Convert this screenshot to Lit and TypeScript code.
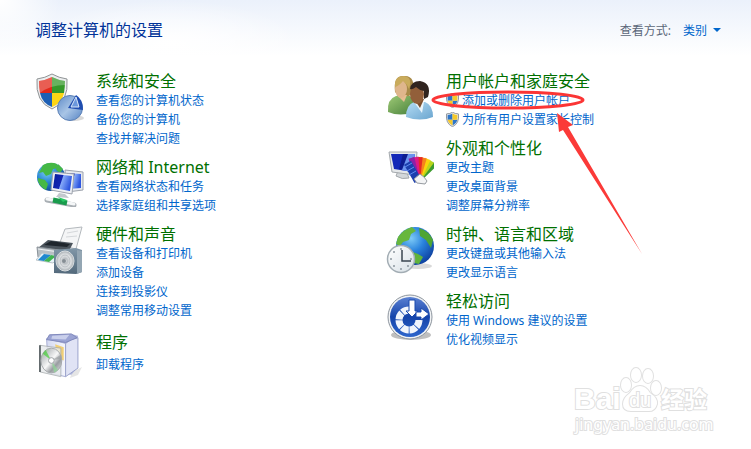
import { LitElement, html, css, svg, nothing, TemplateResult } from "lit";
import { customElement } from "lit/decorators.js";

interface Task {
  label: string;
  elevated?: boolean;
}

interface Category {
  title: string;
  icon: TemplateResult;
  tasks: Task[];
  marked?: boolean;
}

const security = html`<svg viewBox="0 0 48 50" aria-hidden="true">
  <defs>
    <linearGradient id="pie" x1="0" y1="0" x2="1" y2="1"><stop offset="0" stop-color="#5e8bc8"/><stop offset=".5" stop-color="#a9c5e6"/><stop offset="1" stop-color="#5583c3"/></linearGradient>
  </defs>
  <ellipse cx="38" cy="47" rx="10" ry="3" fill="#000" opacity=".15"/>
  <path d="M16 3 Q23 7 31 8 Q33 31 16 38 Q-1 31 1 8 Q9 7 16 3Z" fill="#eceeef" stroke="#909496"/>
  <path d="M16 6 V22 H4 Q3 16 3 10 Q10 9 16 6Z" fill="#e2281a"/>
  <path d="M16 6 Q22 9 29 10 Q29 16 28 22 H16Z" fill="#35992a"/>
  <path d="M4 22 H16 V36 Q6 32 4 22Z" fill="#1d5fb4"/>
  <path d="M28 22 H16 V36 Q26 32 28 22Z" fill="#fcd514"/>
  <path d="M3 10 Q10 9 16 6 Q22 9 29 10 V14 Q14 14 4 22Z" fill="#fff" opacity=".25"/>
  <circle cx="34" cy="37" r="12.500" fill="url(#pie)" stroke="#5a7fb5"/>
  <path d="M32 37 L40 24 Q47 28 47 39Z" fill="#1f4db0"/>
  <path d="M35 36 L40 26 L43 36Z" fill="#6b97dc" stroke="#dbe8fa"/>
</svg>`;

const network = html`<svg viewBox="0 0 48 50" aria-hidden="true">
  <defs>
    <radialGradient id="sea" cx=".35" cy=".3" r=".8"><stop offset="0" stop-color="#7fd0f8"/><stop offset=".5" stop-color="#2583d0"/><stop offset="1" stop-color="#0a3b88"/></radialGradient>
    <linearGradient id="screen" x1="0" y1="0" x2="1" y2=".3"><stop offset="0" stop-color="#0a1f9c"/><stop offset=".5" stop-color="#1326b4"/><stop offset=".55" stop-color="#86aaf8"/><stop offset="1" stop-color="#2f57e0"/></linearGradient>
  </defs>
  <circle cx="15" cy="20" r="14" fill="url(#sea)"/>
  <path d="M7 8 Q14 4 21 7 L22 11 L17 12 L15 17 L10 19 L7 15 L3 16Z M2 21 L9 23 L12 27 L10 33 Q4 30 2 24Z M22 7 L27 12 L24 16 L20 13Z" fill="#45b845"/>
  <path d="M29 13 L47 15 V33 L31 35Z" fill="#e6e9ee" stroke="#9da3ad"/>
  <path d="M31 16 L45 17 V31 L32 32Z" fill="url(#screen)"/>
  <path d="M17 15 L38 17 L36 37 L15 33Z" fill="#eef0f4" stroke="#9da3ad"/>
  <path d="M19 17 L36 19 L34 34 L17 31Z" fill="url(#screen)"/>
  <path d="M23 36 L29 37 L33 41 L20 40Z" fill="#c3c8ce"/>
  <path d="M11 43 L38 48" stroke="#a9afb4" stroke-width="5" stroke-linecap="round"/>
  <path d="M11 42 L38 47" stroke="#f5f7f8" stroke-width="3" stroke-linecap="round"/>
  <path d="M17 43 L31 46" stroke="#1a9b4c" stroke-width="5"/>
  <path d="M22 40 L31 43 L27 45Z" fill="#29c765"/>
</svg>`;

const hardware = html`<svg viewBox="0 0 48 50" aria-hidden="true">
  <defs>
    <linearGradient id="box" x1="0" y1="0" x2="0" y2="1"><stop offset="0" stop-color="#8197a8"/><stop offset="1" stop-color="#53697b"/></linearGradient>
    <radialGradient id="cone"><stop offset="0" stop-color="#f7f7f7"/><stop offset=".25" stop-color="#b8bdc1"/><stop offset=".6" stop-color="#e9ebec"/><stop offset="1" stop-color="#a6adb2"/></radialGradient>
  </defs>
  <g transform="translate(0 2)">
    <path d="M29 3 L46 1 L40 23 L23 19Z" fill="#f4f5f6" stroke="#b4b9bd"/>
    <path d="M31 7 L42 5 M30 11 L41 10" stroke="#d4d7da"/>
    <path d="M12 14 L37 17 L33 25 L2 22Z" fill="#4b545c"/>
    <path d="M15 15 L34 18 L31 21 L8 19Z" fill="#1f262d"/>
    <path d="M1 21 L31 25 V35 L2 31Z" fill="#b9c0c5" stroke="#899198"/>
    <path d="M2 23 L30 27" stroke="#eef1f3"/>
    <path d="M6 27 L24 30 L17 37 L0 34Z" fill="#e8f3f8" stroke="#bcc5ca"/>
    <path d="M8 28 L15 29 L8 35 L2 34Z" fill="#2088cf"/>
    <path d="M15 29 L20 30 L13 36 L8 35Z" fill="#3fb451"/>
    <path d="M18 24 L40 22 L46 24 V46 L40 48 L18 47Z" fill="url(#box)"/>
    <path d="M41 24 L46 25 V46 L41 48Z" fill="#94a6b3"/>
    <ellipse cx="29" cy="35" rx="9" ry="10" fill="url(#cone)" stroke="#d8dde0"/>
    <ellipse cx="29" cy="35" rx="5" ry="6" fill="none" stroke="#b5bbc0"/>
    <circle cx="28" cy="35" r="2" fill="#868e94"/>
  </g>
</svg>`;

const programs = html`<svg viewBox="0 0 48 50" aria-hidden="true">
  <defs>
    <linearGradient id="disc" x1="0" y1="0" x2="1" y2="1"><stop offset="0" stop-color="#6fd04c"/><stop offset=".25" stop-color="#c5c8ca"/><stop offset=".5" stop-color="#f8f8f8"/><stop offset=".7" stop-color="#989ca0"/><stop offset="1" stop-color="#eceef0"/></linearGradient>
    <linearGradient id="carton"><stop offset="0" stop-color="#d4d9f1"/><stop offset="1" stop-color="#f5f6fc"/></linearGradient>
  </defs>
  <path d="M36 40 L46 35 L42 43 L34 46Z" fill="#000" opacity=".1"/>
  <g transform="translate(3 0) scale(.95)">
    <path d="M11 3 L34 2 L41 4 V37 L34 45 L12 43Z" fill="#aeb5dc"/>
    <path d="M8 7 L28 12 V47 L10 43Z" fill="url(#carton)" stroke="#a5acd2"/>
    <path d="M28 12 L34 8 L41 6 V38 L28 47Z" fill="#e0e3f5" stroke="#9aa2cb"/>
    <path d="M11 3 L34 2 L40 6 L28 11 L8 8Z" fill="#9ba4d4" stroke="#8088bb"/>
    <path d="M14 4 L32 3 L28 8 L13 7Z" fill="#c9cfeb"/>
    <path d="M17 13 L26 16 V30 L19 27Z" fill="#f1cf76"/>
    <path d="M1 14 L23 17 V47 L1 42Z" fill="#e8ebec" opacity=".8" stroke="#a5abad"/>
    <path d="M0 14 H2 V42 H0Z" fill="#646b6e"/>
    <ellipse cx="13" cy="30" rx="11" ry="13" fill="url(#disc)" stroke="#a4a8ab"/>
    <path d="M13 30 L4 23 L7 19Z" fill="#49cf3c" opacity=".7"/>
    <path d="M13 30 L20 40 L16 43Z" fill="#8fd695" opacity=".7"/>
    <path d="M13 30 L23 24 L23 28Z" fill="#8d9194" opacity=".5"/>
    <circle cx="13" cy="30" r="3" fill="#fff" stroke="#9ba0a3"/>
  </g>
</svg>`;

const accounts = html`<svg viewBox="0 0 48 50" aria-hidden="true">
  <defs>
    <linearGradient id="green" x1="0" y1="0" x2="1" y2="1"><stop offset="0" stop-color="#9ec976"/><stop offset="1" stop-color="#47803a"/></linearGradient>
    <linearGradient id="blue" x1="0" y1="0" x2="1" y2="1"><stop offset="0" stop-color="#b4dcf4"/><stop offset="1" stop-color="#6aa5cf"/></linearGradient>
  </defs>
  <path d="M2 41 Q1 28 10 25 L24 25 Q29 28 29 41 Q14 46 2 41Z" fill="url(#green)"/>
  <path d="M9 21 Q7 4 18 5 Q30 4 27 23 Q17 29 9 21Z" fill="#a88a48"/>
  <path d="M11 24 H21 L18 31Z" fill="#e7bd91"/>
  <ellipse cx="15" cy="18" rx="6" ry="9" fill="#dfb68c"/>
  <path d="M9 16 Q13 15 17 10 Q21 13 23 18 Q27 6 18 5 Q8 5 9 16Z" fill="#c9ab5c"/>
  <path d="M20 46 Q20 34 28 31 L39 31 Q47 34 47 46 Q34 51 20 46Z" fill="url(#blue)"/>
  <path d="M28 31 H38 L36 42Z" fill="#eaf5fb"/>
  <path d="M28 28 H38 L34 37Z" fill="#7d4e2c"/>
  <ellipse cx="31" cy="23" rx="7" ry="10" fill="#925f3a"/>
  <path d="M24 18 Q25 10 34 10 Q46 12 42 26 L38 28 L38 20 Q33 19 30 16 Q26 19 24 18Z" fill="#30241f"/>
</svg>`;

const fans = ["#3d9c2f", "#b9d51b", "#fbd20c", "#f6831c", "#e62b24", "#dd1a86", "#8d20a6"];

const appearance = html`<svg viewBox="0 0 48 50" aria-hidden="true">
  <path d="M12 33 L21 35 L23 40 Q16 42 10 38Z" fill="#d3d7da" stroke="#a4a9ad"/>
  <path d="M3 14 L31 14 L29 37 L6 34Z" fill="#e5e8ea" stroke="#a4a9ad"/>
  <path d="M5 16 L29 16 L27 34 L8 31Z" fill="#1328b8"/>
  <path d="M19 16 L29 16 L27 34 L15 32Z" fill="#6b93ef"/>
  <path d="M17 16 L22 16 L16 32 L13 31Z" fill="#0d1c90"/>
  <g transform="translate(32 43)">
    ${[44, 34, 24, 14, 4, -6, -16].map(
      (angle, i) => svg`<path d="M-2 0 L-3 -24 L3 -24 L2 0Z" fill=${fans[i]} transform="rotate(${angle})"/>`
    )}
    <path d="M-4 0 L-4 -21 L4 -21 L4 0Z" fill="#1c3fae" transform="rotate(-30)"/>
    <path d="M-13 -14 L-6 -18 M-11 -10 L-4 -14 M-9 -6 L-2 -10" stroke="#5f8cf0"/>
  </g>
  <path d="M28 41 L34 36 L38 39 L41 43 L39 46 L31 45Z" fill="#f3f4f5" stroke="#969ba0"/>
</svg>`;

const clock = html`<svg viewBox="0 0 48 50" aria-hidden="true">
  <defs>
    <radialGradient id="ocean" cx=".4" cy=".3" r=".75"><stop offset="0" stop-color="#7ecbf7"/><stop offset=".45" stop-color="#2a83dd"/><stop offset="1" stop-color="#0b3b9b"/></radialGradient>
    <linearGradient id="dial" x1="0" y1="0" x2="1" y2="1"><stop offset="0" stop-color="#fff"/><stop offset="1" stop-color="#d7e0e6"/></linearGradient>
  </defs>
  <ellipse cx="32" cy="42" rx="14" ry="3" fill="#000" opacity=".15"/>
  <circle cx="29" cy="22" r="19" fill="url(#ocean)"/>
  <path d="M12 13 Q18 5 26 3 L30 7 L25 10 L23 16 L17 18 L14 22 L10 20Z" fill="#67b73d"/>
  <path d="M33 4 Q43 7 47 16 L45 24 L40 16 L34 12Z" fill="#4fa535"/>
  <path d="M24 27 L32 30 L37 33 L33 40 L28 39Z" fill="#60b33b"/>
  <circle cx="15" cy="35" r="13.500" fill="url(#dial)" stroke="#a3adb4" stroke-width="1.500"/>
  <g fill="#8c979f"><circle cx="15" cy="25" r="1"/><circle cx="25" cy="35" r="1"/><circle cx="15" cy="45" r="1"/><circle cx="5" cy="35" r="1"/><circle cx="8" cy="28" r="1"/><circle cx="8" cy="42" r="1"/><circle cx="22" cy="42" r="1"/></g>
  <path d="M16 26 V37 H25" fill="none" stroke="#3a4650" stroke-width="1.500"/>
</svg>`;

const ease = html`<svg viewBox="0 0 48 50" aria-hidden="true">
  <defs>
    <linearGradient id="badge" x1="0" y1="0" x2="0" y2="1"><stop offset="0" stop-color="#5a80d2"/><stop offset=".5" stop-color="#1544aa"/><stop offset="1" stop-color="#2e66cc"/></linearGradient>
  </defs>
  <ellipse cx="25" cy="44" rx="20" ry="5" fill="#000" opacity=".25"/>
  <circle cx="24" cy="26" r="22" fill="#f0f2f4" stroke="#8e969f"/>
  <circle cx="24" cy="26" r="20" fill="url(#badge)"/>
  <path d="M33 29 A10 10 0 1 1 23 19" fill="none" stroke="#f1f5fc" stroke-width="7" pathLength="59" stroke-dasharray="9 1"/>
  <path d="M23 9 H29 V20 H32 L26 26 L20 20 H23Z" fill="#fff" stroke="#1b4aae"/>
  <path d="M30 21 H35 V17 L43 23 L35 29 V26 H30Z" fill="#fff" stroke="#1b4aae"/>
</svg>`;

const shield = html`<svg class="shield" viewBox="0 0 48 56" aria-hidden="true">
  <path d="M24 1 Q34 7 46 7 Q51 42 24 55 Q-3 42 2 7 Q14 7 24 1Z" fill="#eef0f2" stroke="#777e86" stroke-width="3"/>
  <path d="M24 6 V29 H6 Q5 20 6 11 Q17 11 24 6Z M42 29 H24 V50 Q39 42 42 29Z" fill="#2d75c8"/>
  <path d="M24 6 Q31 11 42 11 Q43 20 42 29 H24Z M6 29 H24 V50 Q9 42 6 29Z" fill="#f5c92b"/>
</svg>`;

const columns: Category[][] = [
  [
    { title: "系统和安全", icon: security, tasks: [{ label: "查看您的计算机状态" }, { label: "备份您的计算机" }, { label: "查找并解决问题" }] },
    { title: "网络和 Internet", icon: network, tasks: [{ label: "查看网络状态和任务" }, { label: "选择家庭组和共享选项" }] },
    { title: "硬件和声音", icon: hardware, tasks: [{ label: "查看设备和打印机" }, { label: "添加设备" }, { label: "连接到投影仪" }, { label: "调整常用移动设置" }] },
    { title: "程序", icon: programs, tasks: [{ label: "卸载程序" }] },
  ],
  [
    { title: "用户帐户和家庭安全", icon: accounts, marked: true, tasks: [{ label: "添加或删除用户帐户", elevated: true }, { label: "为所有用户设置家长控制", elevated: true }] },
    { title: "外观和个性化", icon: appearance, tasks: [{ label: "更改主题" }, { label: "更改桌面背景" }, { label: "调整屏幕分辨率" }] },
    { title: "时钟、语言和区域", icon: clock, tasks: [{ label: "更改键盘或其他输入法" }, { label: "更改显示语言" }] },
    { title: "轻松访问", icon: ease, tasks: [{ label: "使用 Windows 建议的设置" }, { label: "优化视频显示" }] },
  ],
];

@customElement("app-root")
export class AppRoot extends LitElement {
  static styles = css`
    :host {
      display: block;
      position: relative;
      box-sizing: border-box;
      min-height: 100vh;
      font: 12px/19px "Noto Sans", "Noto Sans CJK SC", sans-serif;
      background:
        radial-gradient(ellipse 130px 44px at 170px 44px, #fff, #fff0),
        radial-gradient(ellipse 60px 50px at 0 0, #fff, #fff0),
        linear-gradient(#ebf1fb, #fff 56px);
    }
    a { color: #0066cc; text-decoration: none; }
    a:hover { text-decoration: underline; }
    h1, h2, ul { margin: 0; padding: 0; font-weight: 400; }
    ul { list-style: none; }
    header {
      display: flex;
      justify-content: space-between;
      align-items: center;
      height: 60px;
      padding: 0 30px 0 35px;
    }
    h1 { color: #003399; font-size: 16px; line-height: 20px; }
    .view { display: flex; gap: 12px; align-items: center; color: #5a6678; }
    .view button {
      display: flex;
      align-items: center;
      gap: 6px;
      border: 0;
      padding: 0;
      background: none;
      font: inherit;
      color: #0066cc;
    }
    .caret { border: 4px solid transparent; border-top-color: #0066cc; border-bottom: 0; }
    main {
      display: grid;
      grid-template-columns: 1fr 1fr;
      padding: 11px 15px 60px 36px;
    }
    .column { display: flex; flex-direction: column; gap: 9px; }
    .category {
      position: relative;
      display: grid;
      grid-template-columns: 48px 1fr;
      column-gap: 12px;
      align-items: start;
    }
    .icon { height: 0; }
    .icon svg { display: block; width: 48px; height: 50px; }
    h2 { font-size: 16px; line-height: 20px; }
    h2 a { color: #007000; }
    .single { margin-top: 3px; }
    .single h2 { margin-bottom: 3px; }
    li { display: flex; align-items: center; gap: 3px; white-space: nowrap; }
    .shield { width: 13px; height: 15px; }
    .mark {
      position: absolute;
      left: 44px;
      top: 18px;
      width: 216px;
      height: 168px;
      z-index: 1;
      pointer-events: none;
    }
    .watermark {
      position: absolute;
      right: 36px;
      bottom: 12px;
      width: 144px;
      height: 74px;
      fill: #fff;
      stroke: #e0e0e0;
      stroke-width: 2px;
      paint-order: stroke;
      font-family: "Noto Sans", "Noto Sans CJK SC", sans-serif;
    }
    .brand { font-size: 30px; font-weight: 700; font-family: "Liberation Sans", sans-serif; }
    .paw-word { font-size: 20px; font-family: "Liberation Sans", sans-serif; }
    .brand-cn { font-size: 23px; font-weight: 700; }
    .site { font-size: 16px; }
  `;

  private renderCategory(c: Category) {
    return html`<section class="category ${c.tasks.length === 1 ? "single" : ""}">
      <div class="icon">${c.icon}</div>
      <div>
        <h2><a href="#">${c.title}</a></h2>
        <ul>
          ${c.tasks.map((t) => html`<li>${t.elevated ? shield : nothing}<a href="#">${t.label}</a></li>`)}
        </ul>
      </div>
      ${c.marked
        ? html`<svg class="mark" viewBox="0 0 216 168" aria-hidden="true">
            <ellipse cx="78" cy="11" rx="75" ry="8" fill="none" stroke="#fb3535" stroke-width="3"/>
            <path d="M127 24 L143 36 L138 38 L212 165 L133 41 L129 43Z" fill="#fb3a38"/>
          </svg>`
        : nothing}
    </section>`;
  }

  render() {
    return html`
      <header>
        <h1>调整计算机的设置</h1>
        <div class="view">
          <span id="view-label">查看方式:</span>
          <button type="button" aria-describedby="view-label">类别<span class="caret"></span></button>
        </div>
      </header>
      <main>
        ${columns.map((column) => html`<div class="column">${column.map((c) => this.renderCategory(c))}</div>`)}
      </main>
      <svg class="watermark" viewBox="0 0 144 74">
        <text class="brand" x="3" y="46">Bai</text>
        <g>
          <ellipse cx="55" cy="22" rx="5" ry="7"/>
          <ellipse cx="65" cy="12" rx="5" ry="7"/>
          <ellipse cx="77" cy="13" rx="5" ry="7"/>
          <ellipse cx="85" cy="25" rx="5" ry="7"/>
          <path d="M69 23 Q75 23 79 30 Q87 35 86 41 Q84 49 76 48 H60 Q52 48 52 41 Q52 35 59 30 Q63 23 69 23Z"/>
        </g>
        <text class="paw-word" x="58" y="44">du</text>
        <text class="brand-cn" x="90" y="45">经验</text>
        <text class="site" x="4" y="67">jingyan.baidu.com</text>
      </svg>
    `;
  }
}
